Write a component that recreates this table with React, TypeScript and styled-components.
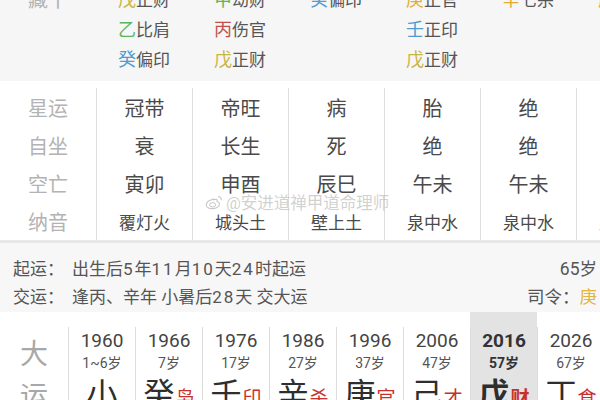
import React from "react";
import styled, { createGlobalStyle } from "styled-components";

const Global = createGlobalStyle`
  html, body { margin: 0; padding: 0; background: #ffffff; }
  body {
    width: 600px;
    height: 400px;
    overflow: hidden;
    font-family: Roboto, "Noto Sans CJK SC", sans-serif;
  }
`;

const Page = styled.div`
  position: relative;
  width: 600px;
  height: 400px;
  overflow: hidden;
  background: #ffffff;
`;

/* ---------- 藏干 ---------- */
const HiddenSection = styled.section`
  margin-top: -17px;
  padding-bottom: 8px;
  width: 672px;
  display: grid;
  grid-template-columns: 96px repeat(6, 96px);
  background: #f6f6f6;
`;

const HiddenColumn = styled.div`
  display: flex;
  flex-direction: column;
`;

const HiddenItem = styled.div`
  height: 30px;
  display: flex;
  align-items: center;
  justify-content: center;
  font-size: 17px;
  color: #555555;
`;

const Stem = styled.span<{ $color: string }>`
  color: ${(p) => p.$color};
  font-size: 18px;
`;

const RowLabel = styled.div`
  height: 30px;
  display: flex;
  align-items: center;
  justify-content: center;
  font-size: 20px;
  color: #b3b3b3;
`;

/* ---------- 星运 / 自坐 / 空亡 / 纳音 ---------- */
const StarSection = styled.section`
  padding-top: 7px;
  width: 672px;
  display: grid;
  grid-template-columns: 96px repeat(6, 96px);
  background: #ffffff;
`;

const StarColumn = styled.div<{ $divider?: boolean }>`
  display: flex;
  flex-direction: column;
  border-left: ${(p) => (p.$divider ? "1px solid #dedede" : "none")};
`;

const StarCell = styled.div<{ $small?: boolean; $label?: boolean }>`
  height: 38px;
  display: flex;
  align-items: center;
  justify-content: center;
  font-size: ${(p) => (p.$small && !p.$label ? 17 : 20)}px;
  color: ${(p) => (p.$label ? "#b3b3b3" : "#4a4a4a")};
`;

const Watermark = styled.div`
  position: absolute;
  left: 205px;
  top: 190px;
  display: flex;
  align-items: center;
  gap: 3px;
  font-size: 16.5px;
  color: rgba(170, 170, 170, 0.55);
  pointer-events: none;
`;

/* ---------- 起运 / 交运 ---------- */
const InfoSection = styled.section`
  border-top: 3px solid #e7e7e7;
  background: #f7f7f7;
  padding: 10px 3px 3px 13px;
  display: flex;
  flex-direction: column;
`;

const InfoLine = styled.div`
  height: 28px;
  display: flex;
  align-items: center;
  justify-content: space-between;
  font-size: 17px;
  color: #555555;
`;

const InfoLeft = styled.div`
  display: flex;
  gap: 8px;
`;

const Num = styled.span`
  letter-spacing: 2px;
`;

const InfoRight = styled.span`
  font-size: 17.5px;
`;

const Gold = styled.span`
  color: #e4b33a;
`;

/* ---------- 大运 ---------- */
const LuckSection = styled.section`
  width: 604px;
  display: grid;
  grid-template-columns: 68px repeat(8, 67px);
  background: #ffffff;
`;

const LuckLabel = styled.div`
  padding-top: 22px;
  display: flex;
  flex-direction: column;
  align-items: center;
  font-size: 28px;
  line-height: 42px;
  color: #a8a8a8;
`;

const LuckColumn = styled.div<{ $active?: boolean }>`
  background: ${(p) => (p.$active ? "#e3e3e3" : "transparent")};
  display: flex;
  flex-direction: column;
`;

const LuckInner = styled.div`
  margin-top: 15px;
  padding-top: 2px;
  border-left: 1px solid #dcdcdc;
  display: flex;
  flex-direction: column;
  align-items: center;
  flex: 1;
`;

const Year = styled.div<{ $active?: boolean }>`
  height: 24px;
  line-height: 24px;
  font-size: 19px;
  font-weight: ${(p) => (p.$active ? 700 : 400)};
  color: ${(p) => (p.$active ? "#333333" : "#444444")};
`;

const Age = styled.div<{ $active?: boolean }>`
  height: 20px;
  line-height: 20px;
  font-size: 14px;
  font-weight: ${(p) => (p.$active ? 700 : 400)};
  color: ${(p) => (p.$active ? "#333333" : "#555555")};
`;

const LuckStem = styled.div<{ $active?: boolean }>`
  height: 44px;
  line-height: 44px;
  display: flex;
  align-items: baseline;
  font-size: 31px;
  font-weight: ${(p) => (p.$active ? 700 : 400)};
  color: #2e2e2e;
`;

const God = styled.span<{ $active?: boolean }>`
  margin-left: 1px;
  font-size: 19px;
  font-weight: ${(p) => (p.$active ? 700 : 400)};
  color: #c8312b;
`;

const C = {
  earth: "#c9b53f",
  wood: "#5bb55e",
  fire: "#c2504c",
  water: "#4f9bd2",
  metal: "#e5ac34",
};

const hidden: { stem: string; color: string; god: string }[][] = [
  [
    { stem: "戊", color: C.earth, god: "正财" },
    { stem: "乙", color: C.wood, god: "比肩" },
    { stem: "癸", color: C.water, god: "偏印" },
  ],
  [
    { stem: "甲", color: C.wood, god: "劫财" },
    { stem: "丙", color: C.fire, god: "伤官" },
    { stem: "戊", color: C.earth, god: "正财" },
  ],
  [{ stem: "癸", color: C.water, god: "偏印" }],
  [
    { stem: "庚", color: C.metal, god: "正官" },
    { stem: "壬", color: C.water, god: "正印" },
    { stem: "戊", color: C.earth, god: "正财" },
  ],
  [{ stem: "辛", color: C.metal, god: "七杀" }],
  [{ stem: "庚", color: C.metal, god: "正官" }],
];

const starLabels = ["星运", "自坐", "空亡", "纳音"];
const starCols = [
  ["冠带", "衰", "寅卯", "覆灯火"],
  ["帝旺", "长生", "申酉", "城头土"],
  ["病", "死", "辰巳", "壁上土"],
  ["胎", "绝", "午未", "泉中水"],
  ["绝", "绝", "午未", "泉中水"],
  ["长生", "帝旺", "子丑", "泉中水"],
];

const luck = [
  { year: "1960", age: "1~6岁", stem: "小", god: "" },
  { year: "1966", age: "7岁", stem: "癸", god: "枭" },
  { year: "1976", age: "17岁", stem: "壬", god: "印" },
  { year: "1986", age: "27岁", stem: "辛", god: "杀" },
  { year: "1996", age: "37岁", stem: "庚", god: "官" },
  { year: "2006", age: "47岁", stem: "己", god: "才" },
  { year: "2016", age: "57岁", stem: "戊", god: "财", active: true },
  { year: "2026", age: "67岁", stem: "丁", god: "食" },
];

const WeiboLogo = () => (
  <svg width="18" height="15" viewBox="0 0 18 15" fill="none">
    <path
      d="M7.5 4.5C4 5 1 7.5 1.2 10c.2 2.6 3.6 4 7.2 3.6 3.7-.4 6.3-2.5 6-5-.2-1.6-1.7-2-2.4-2.2.4-1 .3-2-1-2.1-1 0-2.3.5-2.3.5.3-.9.1-1.6-1.2-.3z"
      stroke="rgba(160,160,160,0.6)"
      strokeWidth="1.1"
    />
    <ellipse cx="7.6" cy="9.8" rx="3" ry="2.2" stroke="rgba(160,160,160,0.6)" strokeWidth="1" />
    <path d="M13 1.5c2 0 3.5 1.6 3.3 3.6" stroke="rgba(160,160,160,0.6)" strokeWidth="1.1" />
  </svg>
);

export default function App() {
  return (
    <>
      <Global />
      <Page>
        <HiddenSection>
          <HiddenColumn>
            <RowLabel>藏干</RowLabel>
          </HiddenColumn>
          {hidden.map((col, i) => (
            <HiddenColumn key={i}>
              {col.map((h, j) => (
                <HiddenItem key={j}>
                  <Stem $color={h.color}>{h.stem}</Stem>
                  {h.god}
                </HiddenItem>
              ))}
            </HiddenColumn>
          ))}
        </HiddenSection>

        <StarSection>
          <StarColumn>
            {starLabels.map((l) => (
              <StarCell key={l} $label>
                {l}
              </StarCell>
            ))}
          </StarColumn>
          {starCols.map((col, i) => (
            <StarColumn key={i} $divider>
              {col.map((v, j) => (
                <StarCell key={j} $small={j === 3}>
                  {v}
                </StarCell>
              ))}
            </StarColumn>
          ))}
        </StarSection>

        <Watermark>
          <WeiboLogo />
          <span>@安进道禅甲道命理师</span>
        </Watermark>

        <InfoSection>
          <InfoLine>
            <InfoLeft>
              <span>起运：</span>
              <span>
                出生后<Num>5</Num>年<Num>11</Num>月<Num>10</Num>天<Num>24</Num>时起运
              </span>
            </InfoLeft>
            <InfoRight>65岁</InfoRight>
          </InfoLine>
          <InfoLine>
            <InfoLeft>
              <span>交运：</span>
              <span>
                逢丙、辛年 小暑后<Num>28</Num>天 交大运
              </span>
            </InfoLeft>
            <InfoRight>
              司令：<Gold>庚</Gold>
            </InfoRight>
          </InfoLine>
        </InfoSection>

        <LuckSection>
          <LuckLabel>
            <span>大</span>
            <span>运</span>
          </LuckLabel>
          {luck.map((l) => (
            <LuckColumn key={l.year} $active={l.active}>
              <LuckInner>
                <Year $active={l.active}>{l.year}</Year>
                <Age $active={l.active}>{l.age}</Age>
                <LuckStem $active={l.active}>
                  {l.stem}
                  {l.god && <God $active={l.active}>{l.god}</God>}
                </LuckStem>
              </LuckInner>
            </LuckColumn>
          ))}
        </LuckSection>
      </Page>
    </>
  );
}
